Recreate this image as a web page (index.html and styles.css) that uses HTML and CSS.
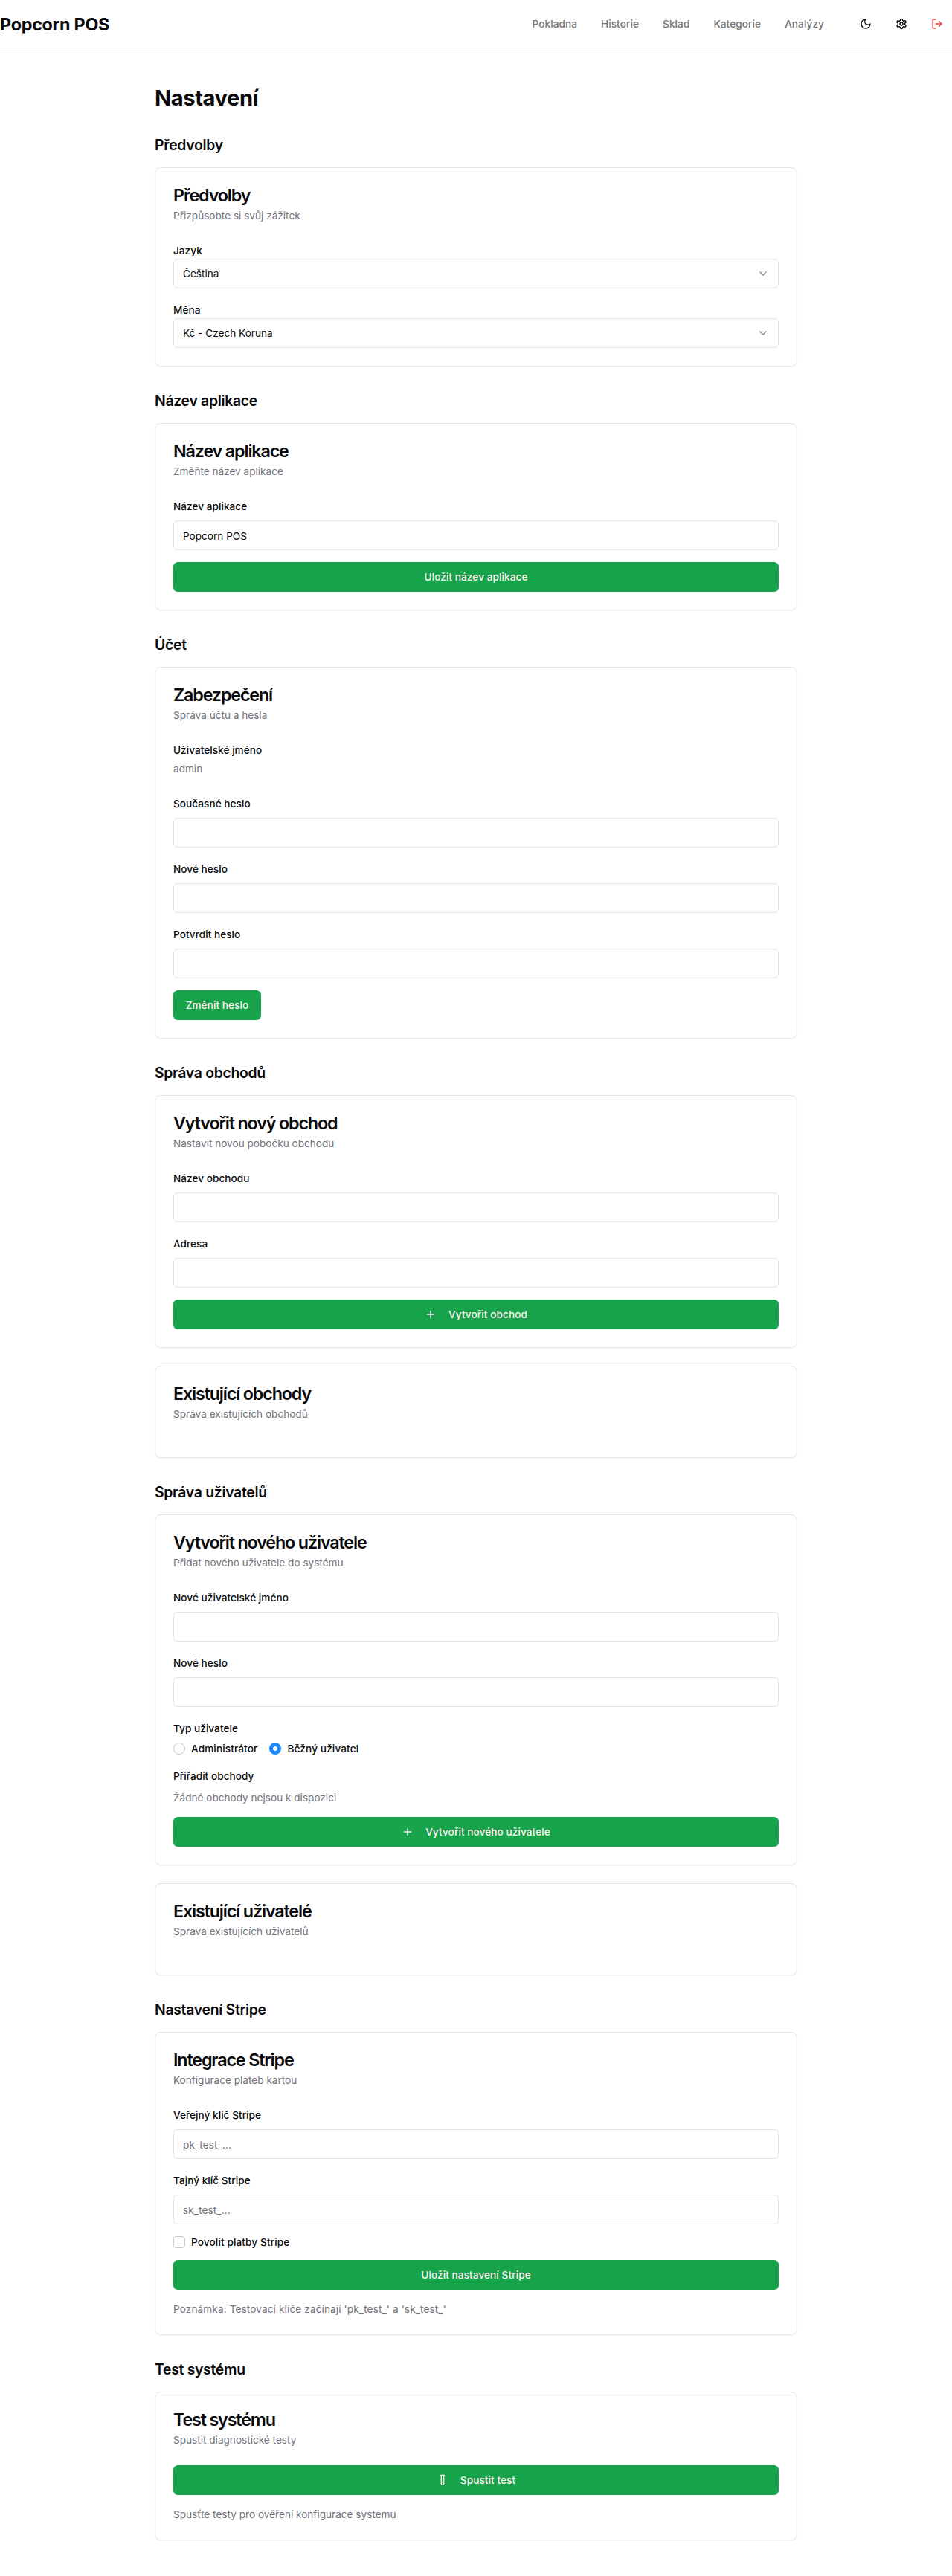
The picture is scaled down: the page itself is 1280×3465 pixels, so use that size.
FILE: index.html
```html
<!DOCTYPE html>
<html lang="cs">
<head>
<meta charset="utf-8">
<title>Popcorn POS</title>
<link rel="stylesheet" href="styles.css">
</head>
<body>
<header class="topbar">
  <a class="brand">Popcorn POS</a>
  <nav class="nav">
    <a>Pokladna</a><a>Historie</a><a>Sklad</a><a>Kategorie</a><a>Analýzy</a>
  </nav>
  <div class="actions">
    <button class="icon-btn" aria-label="Režim"><svg viewBox="0 0 24 24"><path d="M12 3a6 6 0 0 0 9 9 9 9 0 1 1-9-9Z"/></svg></button>
    <button class="icon-btn" aria-label="Nastavení"><svg viewBox="0 0 24 24"><path d="M12.22 2h-.44a2 2 0 0 0-2 2v.18a2 2 0 0 1-1 1.73l-.43.25a2 2 0 0 1-2 0l-.15-.08a2 2 0 0 0-2.73.73l-.22.38a2 2 0 0 0 .73 2.73l.15.1a2 2 0 0 1 1 1.72v.51a2 2 0 0 1-1 1.74l-.15.09a2 2 0 0 0-.73 2.73l.22.38a2 2 0 0 0 2.73.73l.15-.08a2 2 0 0 1 2 0l.43.25a2 2 0 0 1 1 1.73V20a2 2 0 0 0 2 2h.44a2 2 0 0 0 2-2v-.18a2 2 0 0 1 1-1.73l.43-.25a2 2 0 0 1 2 0l.15.08a2 2 0 0 0 2.73-.73l.22-.39a2 2 0 0 0-.73-2.73l-.15-.08a2 2 0 0 1-1-1.74v-.5a2 2 0 0 1 1-1.74l.15-.09a2 2 0 0 0 .73-2.73l-.22-.38a2 2 0 0 0-2.73-.73l-.15.08a2 2 0 0 1-2 0l-.43-.25a2 2 0 0 1-1-1.73V4a2 2 0 0 0-2-2z"/><circle cx="12" cy="12" r="3"/></svg></button>
    <button class="icon-btn danger" aria-label="Odhlásit"><svg viewBox="0 0 24 24"><path d="M9 21H5a2 2 0 0 1-2-2V5a2 2 0 0 1 2-2h4"/><path d="m16 17 5-5-5-5"/><path d="M21 12H9"/></svg></button>
  </div>
</header>

<main class="page">
  <h1>Nastavení</h1>

  <section>
    <h2>Předvolby</h2>
    <div class="card">
      <h3>Předvolby</h3>
      <p class="desc">Přizpůsobte si svůj zážitek</p>
      <div class="content">
        <div><div class="label">Jazyk</div>
          <div class="field select"><span>Čeština</span><svg viewBox="0 0 24 24"><path d="m6 9 6 6 6-6"/></svg></div></div>
        <div><div class="label">Měna</div>
          <div class="field select"><span>Kč - Czech Koruna</span><svg viewBox="0 0 24 24"><path d="m6 9 6 6 6-6"/></svg></div></div>
      </div>
    </div>
  </section>

  <section>
    <h2>Název aplikace</h2>
    <div class="card">
      <h3>Název aplikace</h3>
      <p class="desc">Změňte název aplikace</p>
      <div class="content">
        <div class="group"><label class="label">Název aplikace</label><input class="field" value="Popcorn POS"></div>
        <button class="btn">Uložit název aplikace</button>
      </div>
    </div>
  </section>

  <section>
    <h2>Účet</h2>
    <div class="card">
      <h3>Zabezpečení</h3>
      <p class="desc">Správa účtu a hesla</p>
      <div class="content account">
        <div><div class="label">Uživatelské jméno</div><p class="note username">admin</p></div>
        <div class="stack">
          <div class="group"><label class="label">Současné heslo</label><input class="field" type="password"></div>
          <div class="group"><label class="label">Nové heslo</label><input class="field" type="password"></div>
          <div class="group"><label class="label">Potvrdit heslo</label><input class="field" type="password"></div>
          <button class="btn btn-fit">Změnit heslo</button>
        </div>
      </div>
    </div>
  </section>

  <section>
    <h2>Správa obchodů</h2>
    <div class="cards">
      <div class="card">
        <h3>Vytvořit nový obchod</h3>
        <p class="desc">Nastavit novou pobočku obchodu</p>
        <div class="content">
          <div class="group"><label class="label">Název obchodu</label><input class="field"></div>
          <div class="group"><label class="label">Adresa</label><input class="field"></div>
          <button class="btn"><svg viewBox="0 0 24 24"><path d="M5 12h14M12 5v14"/></svg>Vytvořit obchod</button>
        </div>
      </div>
      <div class="card">
        <h3>Existující obchody</h3>
        <p class="desc">Správa existujících obchodů</p>
        <div class="content"></div>
      </div>
    </div>
  </section>

  <section>
    <h2>Správa uživatelů</h2>
    <div class="cards">
      <div class="card">
        <h3>Vytvořit nového uživatele</h3>
        <p class="desc">Přidat nového uživatele do systému</p>
        <div class="content">
          <div class="group"><label class="label">Nové uživatelské jméno</label><input class="field"></div>
          <div class="group"><label class="label">Nové heslo</label><input class="field" type="password"></div>
          <div class="group">
            <div class="label">Typ uživatele</div>
            <div class="choices">
              <label class="choice"><input class="radio" type="radio" name="role">Administrátor</label>
              <label class="choice"><input class="radio" type="radio" name="role" checked>Běžný uživatel</label>
            </div>
          </div>
          <div class="group"><div class="label">Přiřadit obchody</div><p class="note">Žádné obchody nejsou k dispozici</p></div>
          <button class="btn"><svg viewBox="0 0 24 24"><path d="M5 12h14M12 5v14"/></svg>Vytvořit nového uživatele</button>
        </div>
      </div>
      <div class="card">
        <h3>Existující uživatelé</h3>
        <p class="desc">Správa existujících uživatelů</p>
        <div class="content"></div>
      </div>
    </div>
  </section>

  <section>
    <h2>Nastavení Stripe</h2>
    <div class="card">
      <h3>Integrace Stripe</h3>
      <p class="desc">Konfigurace plateb kartou</p>
      <div class="content">
        <div class="group"><label class="label">Veřejný klíč Stripe</label><input class="field" placeholder="pk_test_..."></div>
        <div class="group"><label class="label">Tajný klíč Stripe</label><input class="field" placeholder="sk_test_..."></div>
        <label class="choice"><input class="checkbox" type="checkbox">Povolit platby Stripe</label>
        <button class="btn">Uložit nastavení Stripe</button>
        <p class="note key-note">Poznámka: Testovací klíče začínají 'pk_test_' a 'sk_test_'</p>
      </div>
    </div>
  </section>

  <section>
    <h2>Test systému</h2>
    <div class="card">
      <h3>Test systému</h3>
      <p class="desc">Spustit diagnostické testy</p>
      <div class="content">
        <button class="btn"><svg viewBox="0 0 24 24"><path d="M14.5 2v17.5c0 1.4-1.1 2.5-2.5 2.5c-1.4 0-2.5-1.1-2.5-2.5V2M8.5 2h7M14.5 16h-5"/></svg>Spustit test</button>
        <p class="note">Spusťte testy pro ověření konfigurace systému</p>
      </div>
    </div>
  </section>
</main>
</body>
</html>
```
FILE: styles.css
```css
* { box-sizing: border-box; margin: 0; }
body { font: 13.6px/20px Inter, "Liberation Sans", sans-serif; color: #09090b; background: #fff; }
button, input { font: inherit; color: inherit; }
svg { width: 16px; height: 16px; flex: none; fill: none; stroke: currentColor; stroke-width: 2; stroke-linecap: round; stroke-linejoin: round; }

.topbar { display: flex; align-items: center; height: 65px; border-bottom: 1px solid #e4e4e7; }
.brand { margin-right: auto; padding-top: 1px; font-size: 23.3px; line-height: 32px; font-weight: 700; letter-spacing: -0.25px; }
.nav { display: flex; gap: 32px; font-weight: 500; color: #737373; letter-spacing: 0.08px; }
.actions { display: flex; gap: 8px; margin-left: 36px; }
.icon-btn { display: flex; align-items: center; justify-content: center; width: 40px; height: 40px; padding: 0; border: 0; background: none; }
.danger { color: #ef4444; }

.page { max-width: 896px; margin: 0 auto; padding: 48px 16px; }
h1 { margin-bottom: 32px; padding-top: 2px; font-size: 29.1px; line-height: 34px; font-weight: 700; letter-spacing: -0.4px; }
section + section { margin-top: 32px; }
h2 { margin-bottom: 16px; font-size: 19.4px; line-height: 28px; font-weight: 600; letter-spacing: -0.3px; }
.cards { display: flex; flex-direction: column; gap: 24px; }
.card { padding: 24px; border: 1px solid #e4e4e7; border-radius: 8px; box-shadow: 0 1px 2px rgba(0, 0, 0, .05); }
h3 { padding-top: 2px; font-size: 23.3px; line-height: 22px; font-weight: 600; letter-spacing: -1.15px; }
.desc { margin-top: 6px; color: #71717a; }
.content, .stack { display: flex; flex-direction: column; gap: 16px; }
.content { padding-top: 24px; }
.account { gap: 24px; }
.group { display: flex; flex-direction: column; gap: 8px; }
.label { display: block; padding-top: 2px; line-height: 22px; font-weight: 500; letter-spacing: 0.04px; }
.note { color: #71717a; }
.key-note { letter-spacing: 0.12px; }
.username { margin-top: 4px; }

.field { display: block; width: 100%; height: 40px; padding: 1px 12px 0; border: 1px solid #e4e4e7; border-radius: 6px; background: #fff; outline: none; }
.field::placeholder { color: #71717a; opacity: 1; letter-spacing: 0.1px; }
.select { display: flex; align-items: center; justify-content: space-between; padding-top: 0; }
.select svg { opacity: .5; }

.btn { display: flex; align-items: center; justify-content: center; gap: 16px; width: 100%; height: 40px; padding: 0 16px; border: 0; border-radius: 6px; background: #16a34a; color: #fff1f2; font-weight: 500; letter-spacing: 0.08px; }
.btn-fit { width: 118px; }

.choices { display: flex; gap: 16px; }
.choice { display: flex; align-items: center; gap: 8px; height: 16px; font-weight: 500; letter-spacing: 0.12px; }
.radio, .checkbox { appearance: none; width: 16px; height: 16px; margin: 0; border: 1px solid #c8c8c8; background: #fff; }
.radio { border-radius: 50%; }
.checkbox { border-radius: 4px; }
.radio:checked { border: 0; background: radial-gradient(circle, #fff 2.7px, #1a85ff 3.4px); }
```
